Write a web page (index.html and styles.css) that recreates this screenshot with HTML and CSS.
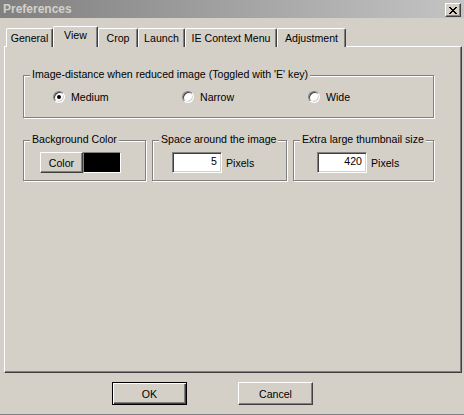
FILE: index.html
```html
<!DOCTYPE html>
<html lang="en">
<head>
  <meta charset="UTF-8">
  <title>Preferences</title>
  <link rel="stylesheet" href="styles.css">
</head>
<body>
  <div class="window">
    <div class="titlebar">
      <span class="title">Preferences</span>
      <span class="close">
        <svg width="8" height="7" viewBox="0 0 8 7" shape-rendering="crispEdges">
          <path fill="#000" d="M0 0h2v1H0z M6 0h2v1H6z M1 1h2v1H1z M5 1h2v1H5z M2 2h4v1H2z M3 3h2v1H3z M2 4h4v1H2z M1 5h2v1H1z M5 5h2v1H5z M0 6h2v1H0z M6 6h2v1H6z"/>
        </svg>
      </span>
    </div>

    <div class="tabs">
      <div class="tab w-general">General</div>
      <div class="tab active w-view">View</div>
      <div class="tab w-crop">Crop</div>
      <div class="tab w-launch">Launch</div>
      <div class="tab w-ie">IE Context Menu</div>
      <div class="tab w-adjust">Adjustment</div>
    </div>

    <div class="panel">
      <div class="group distance">
        <span class="legend">Image-distance when reduced image (Toggled with 'E' key)</span>
        <div class="radios">
          <label class="option"><span class="radio checked"></span>Medium</label>
          <label class="option"><span class="radio"></span>Narrow</label>
          <label class="option"><span class="radio"></span>Wide</label>
        </div>
      </div>

      <div class="row">
        <div class="group bg-color">
          <span class="legend">Background Color</span>
          <div class="controls">
            <span class="btn color-btn">Color</span>
            <span class="swatch"></span>
          </div>
        </div>
        <div class="group space">
          <span class="legend">Space around the image</span>
          <div class="controls">
            <span class="field">5</span>
            <span class="unit">Pixels</span>
          </div>
        </div>
        <div class="group thumb">
          <span class="legend">Extra large thumbnail size</span>
          <div class="controls">
            <span class="field">420</span>
            <span class="unit">Pixels</span>
          </div>
        </div>
      </div>
    </div>

    <div class="buttons">
      <span class="btn dialog-btn default">OK</span>
      <span class="btn dialog-btn">Cancel</span>
    </div>
  </div>
</body>
</html>
```

FILE: styles.css
```css
* { box-sizing: border-box; }
body { margin: 0; background: #d4d0c8; font-family: "Liberation Sans", Arial, sans-serif; font-size: 10.6px; color: #000; overflow: hidden; }
.window { width: 464px; height: 415px; border-bottom: 1px solid #808080; }

.titlebar { height: 18px; display: flex; align-items: center; justify-content: space-between; padding: 0 3px 0 3px; background: linear-gradient(to right, #808080, #c4c4c4); }
.title { font-weight: bold; color: #d4d0c8; font-size: 12px; line-height: 14px; }
.close { width: 16px; height: 14px; margin-top: 2px; display: flex; align-items: center; justify-content: center; background: #d4d0c8; border: 1px solid; border-color: #fff #404040 #404040 #fff; box-shadow: inset -1px -1px 0 #808080; }

.tabs { display: flex; align-items: flex-end; height: 21px; margin-top: 8px; margin-bottom: -1px; padding-left: 6px; }
.tab { height: 19px; padding-top: 2px; line-height: 14px; text-align: center; white-space: nowrap; background: #d4d0c8; border: 1px solid #fff; border-bottom: none; border-right-color: #404040; border-radius: 2px 2px 0 0; box-shadow: inset -1px 0 0 #808080; }
.tab.active { height: 21px; padding-top: 1px; position: relative; z-index: 1; }
.w-general { width: 47px; }
.w-view { width: 45px; }
.w-crop { width: 40px; }
.w-launch { width: 47px; }
.w-ie { width: 92px; }
.w-adjust { width: 69px; }

.panel { height: 327px; margin: 0 2px 0 4px; padding: 28px 0 0 18px; border: 1px solid; border-color: #fff #404040 #404040 #fff; box-shadow: inset -1px -1px 0 #808080; }

.group { position: relative; border: 1px solid #808080; box-shadow: 1px 1px 0 #fff, inset 1px 1px 0 #fff; }
.legend { position: absolute; top: -8px; left: 6px; padding: 0 2px; line-height: 13px; background: #d4d0c8; white-space: nowrap; }

.distance { width: 411px; height: 43px; padding: 14px 0 0 29px; margin-bottom: 22px; }
.radios { display: grid; grid-template-columns: 129px 126px auto; }
.option { display: flex; align-items: center; gap: 6px; line-height: 14px; }
.radio { position: relative; width: 12px; height: 12px; border-radius: 50%; background: #fff; border: 1px solid; border-color: #808080 #fff #fff #808080; box-shadow: inset 1px 1px 0 #404040, inset -1px -1px 0 #d4d0c8; }
.radio.checked::after { content: ""; position: absolute; left: 3px; top: 3px; width: 4px; height: 4px; border-radius: 50%; background: #000; }

.row { display: grid; grid-template-columns: 123px 135px 141px; column-gap: 6px; }
.row .group { height: 41px; padding-top: 11px; }
.bg-color { padding-left: 16px; }
.space { padding-left: 19px; }
.thumb { padding-left: 23px; }
.controls { display: flex; align-items: center; gap: 4px; }

.btn { display: flex; align-items: center; justify-content: center; background: #d4d0c8; border: 1px solid; border-color: #fff #404040 #404040 #fff; box-shadow: inset -1px -1px 0 #808080; }
.color-btn { width: 43px; height: 21px; }
.bg-color .controls { gap: 0; }
.swatch { width: 38px; height: 21px; background: #000; border: 1px solid #808080; border-right-color: #fff; border-bottom-color: #fff; }
.field { width: 50px; height: 21px; padding-right: 4px; text-align: right; line-height: 17px; background: #fff; border: 1px solid; border-color: #808080 #fff #fff #808080; box-shadow: inset 1px 1px 0 #404040, inset -1px -1px 0 #d4d0c8; }

.buttons { display: flex; gap: 51px; padding-left: 112px; margin-top: 9px; }
.dialog-btn { width: 75px; height: 23px; }
.dialog-btn.default { border: 1px solid #000; box-shadow: inset 1px 1px 0 #fff, inset -1px -1px 0 #404040, inset -2px -2px 0 #808080; }
```
